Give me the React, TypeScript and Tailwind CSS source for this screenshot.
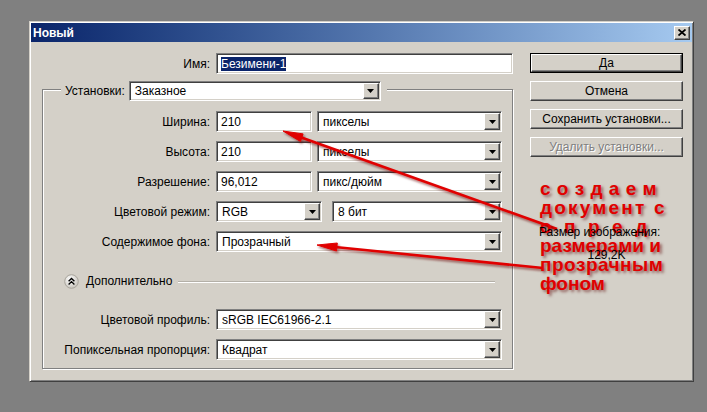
import React from 'react';

const sunken =
  'bg-white border border-t-[#808080] border-l-[#808080] border-r-white border-b-white shadow-[inset_1px_1px_0_#404040,inset_-1px_-1px_0_#d4d0c8]';
const raised =
  'bg-[#d4d0c8] border border-t-white border-l-white border-r-[#404040] border-b-[#404040] shadow-[inset_-1px_-1px_0_#808080]';

const Field: React.FC<{ value: string; className: string }> = ({ value, className }) => (
  <div className={`${sunken} ${className} h-full flex items-center pl-[4px]`}>{value}</div>
);

const DropArrow = () => (
  <svg width="7" height="4" viewBox="0 0 7 4">
    <path d="M0 0h7L3.5 4z" fill="#000" />
  </svg>
);

const Select: React.FC<{ value: string; className: string }> = ({ value, className }) => (
  <div className={`${sunken} ${className} h-full flex items-center p-[1px]`}>
    <span className="flex-1 pl-[4px] whitespace-nowrap overflow-hidden">{value}</span>
    <div className={`${raised} w-[16px] h-full flex items-center justify-center`}>
      <DropArrow />
    </div>
  </div>
);

const Row: React.FC<{ label: string; className?: string; children: React.ReactNode }> = ({
  label,
  className = '',
  children
}) => (
  <div className={`flex items-center h-[21px] ${className}`}>
    <div className="w-[167px] text-right whitespace-nowrap">{label}</div>
    <div className="ml-[6px] flex h-full gap-[5px]">{children}</div>
  </div>
);

const Button: React.FC<{ label: string; disabled?: boolean }> = ({ label, disabled }) => (
  <div
    className={`${raised} h-[20px] flex items-center justify-center ${
      disabled ? 'text-[#808080] [text-shadow:1px_1px_0_#fff]' : ''
    }`}
  >
    {label}
  </div>
);

const ChevronUp = () => (
  <svg width="15" height="15" viewBox="0 0 15 15">
    <defs>
      <radialGradient id="chev" cx="40%" cy="35%" r="70%">
        <stop offset="0" stopColor="#ffffff" />
        <stop offset="1" stopColor="#c4c0b8" />
      </radialGradient>
    </defs>
    <circle cx="7.5" cy="7.5" r="6.8" fill="url(#chev)" stroke="#a8a49c" strokeWidth="1" />
    <path d="M4.6 7.2l2.9-2.8 2.9 2.8M4.6 10.4l2.9-2.8 2.9 2.8" fill="none" stroke="#000" strokeWidth="1.4" />
  </svg>
);

// red note that was painted over the screenshot
const annotation: { text: string; cls: string }[] = [
  { text: 'с о з д а е м', cls: 'tracking-[0.5px]' },
  { text: 'документ с', cls: 'tracking-[2.2px]' },
  { text: 'о п р е д', cls: 'tracking-[3.6px]' },
  { text: 'размерами и', cls: '' },
  { text: 'прозрачным', cls: 'tracking-[0.5px]' },
  { text: 'фоном', cls: '' }
];

export default function App() {
  return (
    <div className="relative w-[707px] h-[412px] bg-[#808080] pt-[21px] pl-[29px] font-['Liberation_Sans',Arial,sans-serif] text-[12px] leading-[14px] text-black overflow-hidden">
      <div className="w-[665px] h-[361px] bg-[#d4d0c8] border border-t-[#d4d0c8] border-l-[#d4d0c8] border-r-[#404040] border-b-[#404040] shadow-[inset_1px_1px_0_#fff,inset_-1px_-1px_0_#808080] p-[1px] flex flex-col">
        {/* title bar */}
        <div className="h-[19px] bg-gradient-to-r from-[#0a246a] to-[#a6caf0] flex items-center pl-[2px] pr-[2px]">
          <span className="text-white font-bold flex-1">Новый</span>
          <div className={`${raised} w-[16px] h-[14px] flex items-center justify-center`}>
            <svg width="8" height="7" viewBox="0 0 8 7">
              <path d="M0.5 0.5l7 6M7.5 0.5l-7 6" stroke="#000" strokeWidth="1.8" />
            </svg>
          </div>
        </div>

        <div className="flex flex-1 pl-[11px]">
          {/* left column */}
          <div className="w-[471px] flex flex-col pt-[11px]">
            <div className="flex items-center h-[21px]">
              <div className="w-[168px] text-right">Имя:</div>
              <div className={`${sunken} ml-[6px] w-[297px] h-full flex items-center pl-[4px]`}>
                <span className="bg-[#0a246a] text-white">Безимени-1</span>
              </div>
            </div>

            <div className="mt-[15px] border border-[#808080] shadow-[inset_1px_1px_0_#fff,1px_1px_0_#fff] flex flex-col pb-[8px]">
              <div className="-mt-[9px] ml-[18px] w-fit h-[20px] bg-[#d4d0c8] flex items-center pl-[4px] pr-[6px]">
                <span>Установки:</span>
                <Select value="Заказное" className="ml-[4px] w-[252px]" />
              </div>

              <Row label="Ширина:" className="mt-[10px]">
                <Field value="210" className="w-[96px]" />
                <Select value="пикселы" className="w-[185px]" />
              </Row>
              <Row label="Высота:" className="mt-[9px]">
                <Field value="210" className="w-[96px]" />
                <Select value="пикселы" className="w-[185px]" />
              </Row>
              <Row label="Разрешение:" className="mt-[9px]">
                <Field value="96,012" className="w-[96px]" />
                <Select value="пикс/дюйм" className="w-[185px]" />
              </Row>
              <Row label="Цветовой режим:" className="mt-[9px]">
                <Select value="RGB" className="w-[106px]" />
                <Select value="8 бит" className="ml-[5px] w-[170px]" />
              </Row>
              <Row label="Содержимое фона:" className="mt-[9px]">
                <Select value="Прозрачный" className="w-[286px]" />
              </Row>

              <div className="mt-[21px] h-[16px] flex items-center pl-[21px] pr-[17px]">
                <ChevronUp />
                <span className="ml-[7px]">Дополнительно</span>
                <div className="ml-[6px] flex-1 border-t border-[#b4b0a8] shadow-[0_1px_0_#fff]" />
              </div>

              <Row label="Цветовой профиль:" className="mt-[20px]">
                <Select value="sRGB IEC61966-2.1" className="w-[286px]" />
              </Row>
              <Row label="Попиксельная пропорция:" className="mt-[9px]">
                <Select value="Квадрат" className="w-[286px]" />
              </Row>
            </div>
          </div>

          {/* right column */}
          <div className="ml-[17px] w-[153px] flex flex-col pt-[11px]">
            <div className="border border-black">
              <div className={`${raised} h-[18px] flex items-center justify-center`}>Да</div>
            </div>
            <div className="mt-[8px]">
              <Button label="Отмена" />
            </div>
            <div className="mt-[8px]">
              <Button label="Сохранить установки..." />
            </div>
            <div className="mt-[8px]">
              <Button label="Удалить установки..." disabled />
            </div>
            <div className="relative z-10 mt-[68px] pl-[9px] whitespace-nowrap">Размер изображения:</div>
            <div className="relative z-10 mt-[9px] text-center">129,2K</div>
          </div>
        </div>
      </div>

      {/* red arrows */}
      <svg className="absolute inset-0 pointer-events-none" width="707" height="412" viewBox="0 0 707 412">
        <defs>
          <filter id="shade" x="-10%" y="-10%" width="120%" height="130%">
            <feDropShadow dx="1.5" dy="2" stdDeviation="1.2" floodColor="#600" floodOpacity="0.55" />
          </filter>
        </defs>
        <g filter="url(#shade)" fill="#e00000" stroke="#e00000">
          <line x1="300" y1="137" x2="557" y2="229" strokeWidth="2.6" />
          <polygon points="283,131 300.5,141.5 303.1,133.9" strokeWidth="1" />
          <line x1="335" y1="247" x2="543" y2="268" strokeWidth="2.6" />
          <polygon points="317,245 336.5,251 337.3,243" strokeWidth="1" />
        </g>
      </svg>
      <div className="absolute left-[540px] top-[179px] text-[19px] leading-[19px] font-bold text-[#e00000] [text-shadow:2px_2px_3px_rgba(90,0,0,0.55)] whitespace-pre pointer-events-none">
        {annotation.map((l) => (
          <div key={l.text} className={l.cls}>
            {l.text}
          </div>
        ))}
      </div>
    </div>
  );
}
